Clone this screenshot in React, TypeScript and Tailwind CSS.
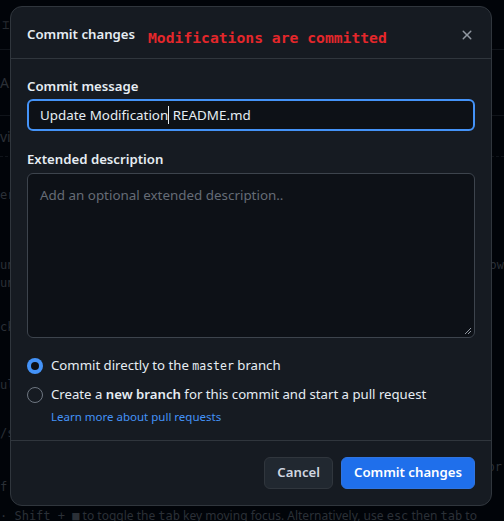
import React from 'react';

const sans = { fontFamily: '"Noto Sans", "Open Sans", sans-serif' } as const;
const mono = "font-['DejaVu_Sans_Mono',monospace]";

function Backdrop() {
  // dim page behind the modal overlay
  return (
    <div className={`absolute inset-0 overflow-hidden bg-[#010409] ${mono} text-[12px] text-[#2b3037]`}>
      <div className="flex h-[50px] items-center border-b border-[#10141a] pl-[2px] text-[#262a30]">⌶</div>
      <div className="flex h-[66px] items-center border-b border-[#10141a] text-[14px]" style={sans}>A</div>
      <div className="flex h-[40px] items-center text-[14px]" style={sans}>vi</div>
      <div className="h-[16px] border-t border-dashed border-[#10141a]" />
      <div className="mt-[14px] h-[20px]">er</div>
      <div className="mt-[50px] flex justify-between">
        <span>un</span>
        <span>ow</span>
      </div>
      <div>un</div>
      <div className="mt-[26px]">ck</div>
      <div className="mt-[40px]">ul</div>
      <div className="mt-[30px]">/s</div>
      <div className="mt-[16px] flex justify-end pr-[2px]">pr</div>
      <div className="mt-[2px]">f</div>
      <div className="absolute left-0 top-[507px] whitespace-nowrap text-[12px] text-[#2b3037]" style={sans}>
        <span className={mono}>· Shift + ■</span> to toggle the <span className={mono}>tab</span> key moving focus. Alternatively, use{' '}
        <span className={mono}>esc</span> then <span className={mono}>tab</span> to
      </div>
    </div>
  );
}

function Radio({ checked }: { checked?: boolean }) {
  return checked ? (
    <span className="flex h-4 w-4 shrink-0 items-center justify-center rounded-full bg-[#4493f8]">
      <span className="h-[8px] w-[8px] rounded-full bg-[#0d1117]" />
    </span>
  ) : (
    <span className="h-4 w-4 shrink-0 rounded-full border border-[#6e7681]" />
  );
}

export default function App() {
  return (
    <div className="relative h-[521px] w-[504px] overflow-hidden" style={sans}>
      <Backdrop />
      <div className="absolute left-[10px] top-[6px] flex h-[500px] w-[482px] flex-col rounded-[12px] border border-[#30363d] bg-[#161b22] text-[#e6edf3]">
        <div className="relative flex h-[52px] items-start border-b border-[#30363d] px-[16px] pt-[17px]">
          <span className="text-[13.2px] font-semibold leading-5 text-[#e6edf3]">Commit changes</span>
          <span className={`ml-[13px] mt-[4px] ${mono} text-[14.7px] font-bold leading-5 text-[#e4272b]`}>
            Modifications are committed
          </span>
          <button className="absolute right-[12px] top-[16px] flex h-6 w-6 items-center justify-center text-[#9198a1]">
            <svg width="16" height="16" viewBox="0 0 16 16" fill="currentColor">
              <path d="M3.72 3.72a.75.75 0 0 1 1.06 0L8 6.94l3.22-3.22a.749.749 0 0 1 1.275.326.749.749 0 0 1-.215.734L9.06 8l3.22 3.22a.749.749 0 0 1-.326 1.275.749.749 0 0 1-.734-.215L8 9.06l-3.22 3.22a.751.751 0 0 1-1.042-.018.751.751 0 0 1-.018-1.042L6.94 8 3.72 4.78a.75.75 0 0 1 0-1.06Z" />
            </svg>
          </button>
        </div>

        <div className="flex flex-col px-[16px] pt-[17px]">
          <label className="text-[13.2px] font-semibold leading-5">Commit message</label>
          <div className="mt-[3px] flex h-[32px] items-center whitespace-pre rounded-[6px] border-2 border-[#4493f8] bg-[#0d1117] px-[11px] text-[13.4px] text-[#e6edf3]">
            <span>Update Modification</span>
            <span className="h-[18px] w-px bg-[#e6edf3]" />
            <span> README.md</span>
          </div>

          <label className="mt-[18px] text-[13.2px] font-semibold leading-5">Extended description</label>
          <div className="relative mt-[4px] h-[165px] rounded-[6px] border border-[#3d444d] bg-[#0d1117] px-[12px] pt-[11px] text-[13.4px] text-[#656c76]">
            Add an optional extended description..
            <svg className="absolute bottom-[2px] right-[2px]" width="8" height="8" viewBox="0 0 8 8" stroke="#9198a1" strokeWidth="1">
              <path d="M7 1 1 7M7 4 4 7" />
            </svg>
          </div>

          <div className="mt-[18px] flex items-center gap-[8px] text-[13.2px]">
            <Radio checked />
            <span>
              Commit directly to the <span className={`${mono} text-[11.5px]`}>master</span> branch
            </span>
          </div>
          <div className="mt-[9px] flex items-center gap-[8px] text-[13.2px]">
            <Radio />
            <span>
              Create a <b className="font-semibold">new branch</b> for this commit and start a pull request
            </span>
          </div>
          <a className="ml-[24px] mt-[3px] text-[11.5px] text-[#4493f8]">Learn more about pull requests</a>
        </div>

        <div className="mt-auto flex justify-end gap-[8px] border-t border-[#30363d] px-[16px] pb-[16px] pt-[16px]">
          <button className="h-[32px] rounded-[6px] border border-[#30363d] bg-[#212830] px-[12px] text-[13.2px] font-semibold text-[#d1d7e0]">
            Cancel
          </button>
          <button className="h-[32px] rounded-[6px] border border-[#2f74e0] bg-[#1f6feb] px-[12px] text-[13.2px] font-semibold text-white">
            Commit changes
          </button>
        </div>
      </div>
    </div>
  );
}
